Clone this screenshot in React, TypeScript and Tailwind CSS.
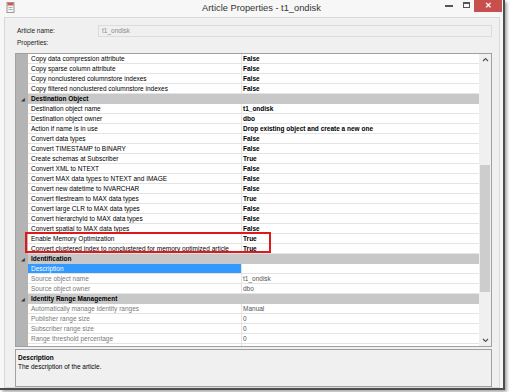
import React from "react";

type Row = {
  n: string;
  v?: string;
  cat?: boolean;
  sel?: boolean;
  ro?: boolean;
};

const rows: Row[] = [
  { n: "Copy data compression attribute", v: "False" },
  { n: "Copy sparse column attribute", v: "False" },
  { n: "Copy nonclustered columnstore indexes", v: "False" },
  { n: "Copy filtered nonclustered columnstore indexes", v: "False" },
  { n: "Destination Object", cat: true },
  { n: "Destination object name", v: "t1_ondisk" },
  { n: "Destination object owner", v: "dbo" },
  { n: "Action if name is in use", v: "Drop existing object and create a new one" },
  { n: "Convert data types", v: "False" },
  { n: "Convert TIMESTAMP to BINARY", v: "False" },
  { n: "Create schemas at Subscriber", v: "True" },
  { n: "Convert XML to NTEXT", v: "False" },
  { n: "Convert MAX data types to NTEXT and IMAGE", v: "False" },
  { n: "Convert new datetime to NVARCHAR", v: "False" },
  { n: "Convert filestream to MAX data types", v: "True" },
  { n: "Convert large CLR to MAX data types", v: "False" },
  { n: "Convert hierarchyId to MAX data types", v: "False" },
  { n: "Convert spatial to MAX data types", v: "False" },
  { n: "Enable Memory Optimization", v: "True" },
  { n: "Convert clustered index to nonclustered for memory optimized article", v: "True" },
  { n: "Identification", cat: true },
  { n: "Description", v: "", sel: true },
  { n: "Source object name", v: "t1_ondisk", ro: true },
  { n: "Source object owner", v: "dbo", ro: true },
  { n: "Identity Range Management", cat: true },
  { n: "Automatically manage identity ranges", v: "Manual", ro: true },
  { n: "Publisher range size", v: "0", ro: true },
  { n: "Subscriber range size", v: "0", ro: true },
  { n: "Range threshold percentage", v: "0", ro: true },
  { n: "Next range starting value", v: "", ro: true },
];

function GridRow({ row }: { row: Row }) {
  if (row.cat) {
    return (
      <div className="flex h-[10px] shrink-0">
        <div className="w-[12px] bg-[#b4b4b4] flex items-center justify-center">
          <span className="text-[5px] leading-none text-[#3c3c3c] ml-[2px]">◢</span>
        </div>
        <div className="flex-1 bg-[#c8c8c8] pl-[3px] font-bold text-black leading-[10px]">{row.n}</div>
      </div>
    );
  }
  return (
    <div className="flex h-[10px] shrink-0">
      <div className="w-[12px] bg-[#b4b4b4]" />
      <div
        className={
          row.sel
            ? "w-[213px] bg-[#3399ff] text-white pl-[3px] leading-[9px] border-b border-[#e4e4e4] whitespace-nowrap overflow-hidden"
            : row.ro
            ? "w-[213px] bg-white text-[#7a7a7a] pl-[3px] leading-[9px] border-b border-[#e4e4e4] whitespace-nowrap overflow-hidden"
            : "w-[213px] bg-white text-black pl-[3px] leading-[9px] border-b border-[#e4e4e4] whitespace-nowrap overflow-hidden"
        }
      >
        {row.n}
      </div>
      <div className="w-[1px] bg-[#e4e4e4]" />
      <div
        className={
          row.ro
            ? "flex-1 bg-white pl-[1px] text-[#555] leading-[9px] border-b border-[#e4e4e4] whitespace-nowrap"
            : "flex-1 bg-white pl-[1px] font-bold text-black leading-[9px] border-b border-[#e4e4e4] whitespace-nowrap"
        }
      >
        {row.v}
      </div>
    </div>
  );
}

export default function App() {
  return (
    <div className="relative w-[510px] h-[392px] bg-white overflow-hidden font-['Liberation_Sans',Arial,sans-serif]">
      {/* window */}
      <div className="w-[505px] h-[390px] bg-[#f7f7f7] border-r-2 border-b-2 border-[#4d4d4d] shadow-[2px_2px_3px_rgba(0,0,0,0.35)] flex flex-col">
        {/* title bar */}
        <div className="h-[17px] flex items-start shrink-0">
          <svg width="14" height="14" viewBox="0 0 14 14" className="ml-[4px] mt-[1px]">
            <rect x="3" y="1.5" width="7" height="10" fill="#f4f4f4" stroke="#9a9a9a" strokeWidth="1" />
            <rect x="3.5" y="2" width="6" height="2.5" fill="#d9534f" />
            <line x1="4.5" y1="6.5" x2="8.5" y2="6.5" stroke="#b0b0b0" />
            <line x1="4.5" y1="8.5" x2="8.5" y2="8.5" stroke="#b0b0b0" />
          </svg>
          <div className="flex-1 text-center text-[9.3px] leading-[16px] text-[#333] pl-[60px]">
            Article Properties - t1_ondisk
          </div>
          <div className="w-[8px] h-[2px] bg-[#555] mt-[5px] mr-[10px]" />
          <div className="w-[7px] h-[6px] border border-t-2 border-[#555] mt-[2px] mr-[4px]" />
          <div className="w-[28px] h-[12px] bg-[#c7504f] flex items-center justify-center text-white text-[8px] font-bold leading-none mr-[1px]">
            ✕
          </div>
        </div>
        {/* client area */}
        <div className="ml-[4px] w-[496px] h-[371px] bg-[#f0f0f0] border border-[#d9d9d9] pl-[10px] pr-[7px] flex flex-col text-[6.5px]">
          <div className="flex items-center mt-[7px] h-[12px]">
            <div className="w-[83px] pl-[2px] text-[#222]">Article name:</div>
            <div className="flex-1 h-[12px] border border-[#dcdcdc] bg-[#f0f0f0] pl-[3px] leading-[10px] text-[#8a8a8a]">
              t1_ondisk
            </div>
          </div>
          <div className="h-[10px] mt-[1px] pl-[2px] leading-[10px] text-[#222]">Properties:</div>
          {/* property grid */}
          <div className="mt-[5px] h-[294px] border border-[#a0a0a0] flex bg-white">
            <div className="w-[463px] flex flex-col overflow-hidden">
              {rows.map((r, i) => (
                <GridRow key={i} row={r} />
              ))}
            </div>
            <div className="w-[12px] bg-[#f0f0f0] flex flex-col items-center">
              <svg width="7" height="12" viewBox="0 0 7 12">
                <path d="M1 7 L3.5 4.5 L6 7" fill="none" stroke="#555" strokeWidth="1.2" />
              </svg>
              <div className="w-[10px] h-[127px] bg-[#cdcdcd] mt-[99px]" />
              <svg width="7" height="12" viewBox="0 0 7 12" className="mt-auto mb-[0px]">
                <path d="M1 5 L3.5 7.5 L6 5" fill="none" stroke="#555" strokeWidth="1.2" />
              </svg>
            </div>
          </div>
          {/* description panel */}
          <div className="mt-[2px] h-[38px] border border-[#a0a0a0] bg-[#f0f0f0] pl-[2px] pt-[3px] text-black">
            <div className="font-bold leading-[9px]">Description</div>
            <div className="leading-[10px]">The description of the article.</div>
          </div>
        </div>
      </div>
      {/* annotation box */}
      <div className="absolute left-[25px] top-[232px] w-[246px] h-[21px] border-2 border-[#e01818]" />
    </div>
  );
}
